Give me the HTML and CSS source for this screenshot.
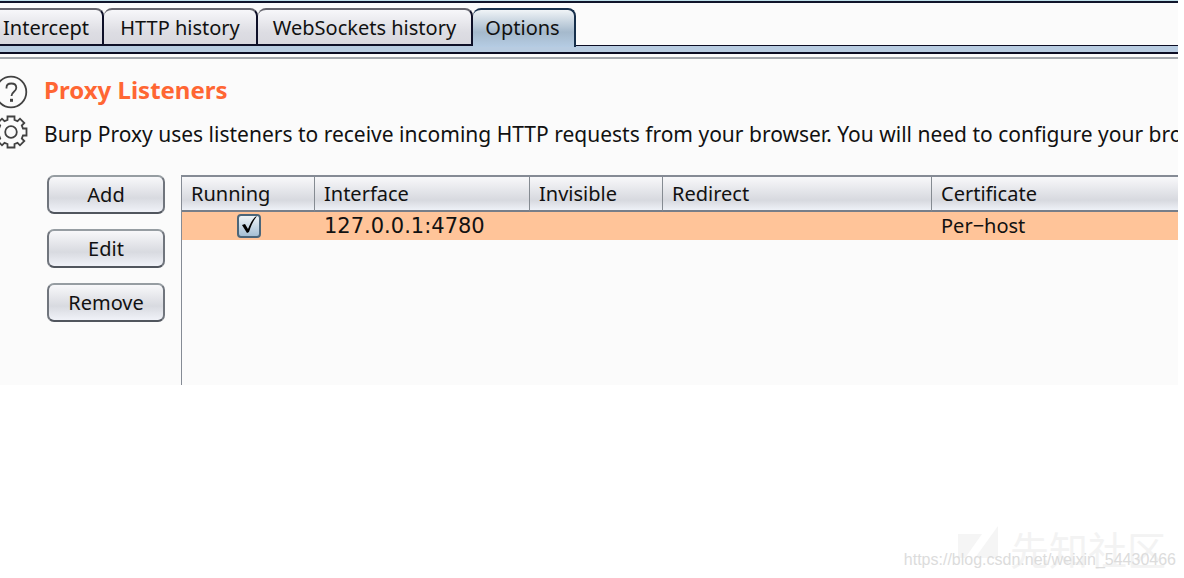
FILE: index.html
```html
<!DOCTYPE html>
<html lang="en">
<head>
<meta charset="utf-8">
<title>Proxy options</title>
<link rel="stylesheet" href="styles.css">
</head>
<body>
<main class="window">
  <nav class="tabs" role="tablist">
    <button class="tab tab-first" role="tab">Intercept</button>
    <button class="tab tab-http" role="tab">HTTP history</button>
    <button class="tab tab-sockets" role="tab">WebSockets history</button>
    <button class="tab tab-options selected" role="tab" aria-selected="true">Options</button>
  </nav>
  <div class="tab-rail"></div>
  <section class="panel">
    <div class="icons">
      <svg class="icon" viewBox="0 0 34 34" role="img" aria-label="Help">
        <circle cx="17" cy="17" r="15.3"/>
        <path d="M12.500 13.500v-1c0-2.800 2-4 4.800-4s5 1.300 5 4.300c0 4.200-4.800 3.800-4.800 8.200"/>
        <path class="dot" d="M16 23.800h3v3h-3z"/>
      </svg>
      <svg class="icon" viewBox="0 0 34 34" role="img" aria-label="Settings">
        <path d="M13.500 5V1.500h7V5l3 1.200 2.500-2.500 4.300 4.300-2.500 2.500 1.200 3h3.500v7H29l-1.200 3 2.500 2.500-4.300 4.300-2.500-2.500-3 1.200v3.500h-7V29l-3-1.200L8 30.300 3.700 26l2.500-2.500L5 20.500H1.500v-7H5l1.200-3L3.700 8 8 3.700l2.500 2.500z"/>
        <circle cx="17" cy="17" r="5.800"/>
      </svg>
    </div>
    <div class="content">
      <h1 class="title">Proxy Listeners</h1>
      <p class="description">Burp Proxy uses listeners to receive incoming HTTP requests from your browser. You will need to configure your bro</p>
      <div class="listeners">
        <div class="actions">
          <button class="action">Add</button>
          <button class="action">Edit</button>
          <button class="action">Remove</button>
        </div>
        <div class="table-box">
          <table class="table">
            <colgroup><col class="col-running"><col class="col-interface"><col class="col-invisible"><col class="col-redirect"><col></colgroup>
            <thead><tr><th>Running</th><th>Interface</th><th>Invisible</th><th>Redirect</th><th>Certificate</th></tr></thead>
            <tbody><tr>
              <td class="running-cell"><label class="check"><input class="check-input" type="checkbox" checked aria-label="Running"><svg class="check-mark" viewBox="0 0 24 24"><path d="M5 11l3-1 3 5c2-5 4-9 7-12l2-1c-4 5-6 10-8 16l-2 1z"/></svg></label></td>
              <td class="address-cell">127.0.0.1:4780</td><td></td><td></td><td>Per−host</td>
            </tr></tbody>
          </table>
        </div>
      </div>
    </div>
  </section>
</main>
<footer class="watermark">
  <div class="brand">
    <svg class="brand-logo" viewBox="0 0 40 32" aria-hidden="true"><path d="M0 8h24L7 32H0zM40 0v32H17z"/></svg>
    <span>先知社区</span>
  </div>
  <div class="address">https://blog.csdn.net/weixin_54430466</div>
</footer>
</body>
</html>
```
FILE: styles.css
```css
* { box-sizing: border-box; }
body {
  margin: 0;
  min-height: 100vh;
  display: flex;
  flex-direction: column;
  overflow: hidden;
  background: #fff;
  color: #111;
  font: 20px/26px "Noto Sans", "Open Sans", sans-serif;
}
button { font: inherit; color: inherit; }
.window {
  margin-right: 6px;
  background: #fbfbfb;
  border-top: 1px solid #bfe0ea;
  overflow: hidden;
}
.tabs {
  display: flex;
  height: 45px;
  padding-top: 5px;
  border-top: 2px solid #10152b;
}
.tab {
  height: 38px;
  padding: 2px 0 0;
  border: 2px solid #0e1028;
  border-top-color: #66666e;
  border-left-width: 0;
  border-radius: 8px 8px 0 0;
  background: linear-gradient(#f7f7fa, #dddde3 65%, #d8d8df);
  white-space: nowrap;
}
.tab-first { width: 104px; padding-right: 10px; border-top-left-radius: 0; }
.tab-http { width: 154px; }
.tab-sockets { width: 215px; }
.tab-options { width: 103px; }
.tab.selected {
  height: 39px;
  border-color: #17304c;
  border-bottom: 0;
  padding: 0 2px 1px 0;
  background: linear-gradient(#f0f4f7, #a5b9cc 60%, #b5cce3);
}
.tab-rail {
  height: 9px;
  margin-top: -1px;
  background: #b8cce1;
  border-top: 1px solid #0c0d24;
  border-bottom: 2px solid #0c0d24;
}
.panel {
  display: flex;
  height: 328px;
  margin-top: 3px;
  border-top: 2px solid #a3a8ae;
}
.icons {
  display: flex;
  flex-direction: column;
  gap: 6px;
  flex: none;
  width: 44px;
  margin-left: -6px;
  padding-top: 16px;
}
.icon {
  width: 34px;
  height: 34px;
  fill: none;
  stroke: #424242;
  stroke-width: 1.8;
}
.icon .dot { fill: #424242; stroke: none; }
.content {
  flex: 1;
  min-width: 0;
  margin-left: 6px;
  display: flex;
  flex-direction: column;
}
.title {
  margin: 18px 0 0;
  font-size: 24px;
  line-height: 26px;
  color: #ff6633;
}
.description {
  margin: 18px 0 0;
  font-size: 21px;
  white-space: nowrap;
}
.listeners {
  display: flex;
  flex: 1;
  gap: 16px;
  margin-top: 28px;
  padding-left: 3px;
}
.actions {
  display: flex;
  flex-direction: column;
  gap: 15px;
  width: 118px;
}
.action {
  height: 39px;
  padding: 0;
  border: 2px solid #70757d;
  border-top-color: #969da2;
  border-bottom-color: #51565e;
  border-radius: 7px;
  background: linear-gradient(#f8f8fa, #d8dae0 60%, #f0f2f8);
}
.table-box {
  flex: 1;
  border: 1px solid #858b95;
  border-top-width: 2px;
  border-right: 0;
  border-bottom: 0;
}
.table {
  width: 100%;
  table-layout: fixed;
  border-collapse: separate;
  border-spacing: 0;
}
.col-running { width: 133px; }
.col-interface { width: 215px; }
.col-invisible { width: 133px; }
.col-redirect { width: 269px; }
.table th {
  height: 35px;
  padding: 0 0 0 9px;
  border-right: 1px solid #858b92;
  border-bottom: 2px solid #777e89;
  background: linear-gradient(#f8f8fa, #d7d9df 70%, #eef1f7);
  font-weight: 400;
  text-align: left;
}
.table th:last-child { border-right: 0; }
.table td {
  height: 28px;
  padding: 0 0 0 9px;
  background: #ffc499;
}
.table .running-cell { padding: 0; }
.table .address-cell { font-family: "DejaVu Sans", sans-serif; font-size: 21px; }
.check {
  display: block;
  position: relative;
  width: 24px;
  height: 24px;
  margin: 0 auto;
}
.check-input {
  appearance: none;
  display: block;
  width: 24px;
  height: 24px;
  margin: 0;
  border: 2px solid #4b6579;
  border-radius: 4px;
  background: linear-gradient(#eef4f8, #a5bfd4);
}
.check-mark {
  position: absolute;
  inset: 0;
  pointer-events: none;
}
.watermark {
  position: relative;
  display: flex;
  justify-content: flex-end;
  margin-top: auto;
  padding: 0 18px 8px 0;
}
.brand {
  display: flex;
  align-items: flex-end;
  gap: 12px;
  color: #f3f3f3;
  font: 39px/44px "Noto Sans CJK SC", sans-serif;
}
.brand-logo {
  width: 40px;
  height: 32px;
  margin-bottom: 12px;
  fill: #f5f5f5;
}
.address {
  position: absolute;
  right: 8px;
  bottom: 8px;
  color: #dcdcdc;
  font: 16px/20px "Liberation Sans", Arial, sans-serif;
}
```
